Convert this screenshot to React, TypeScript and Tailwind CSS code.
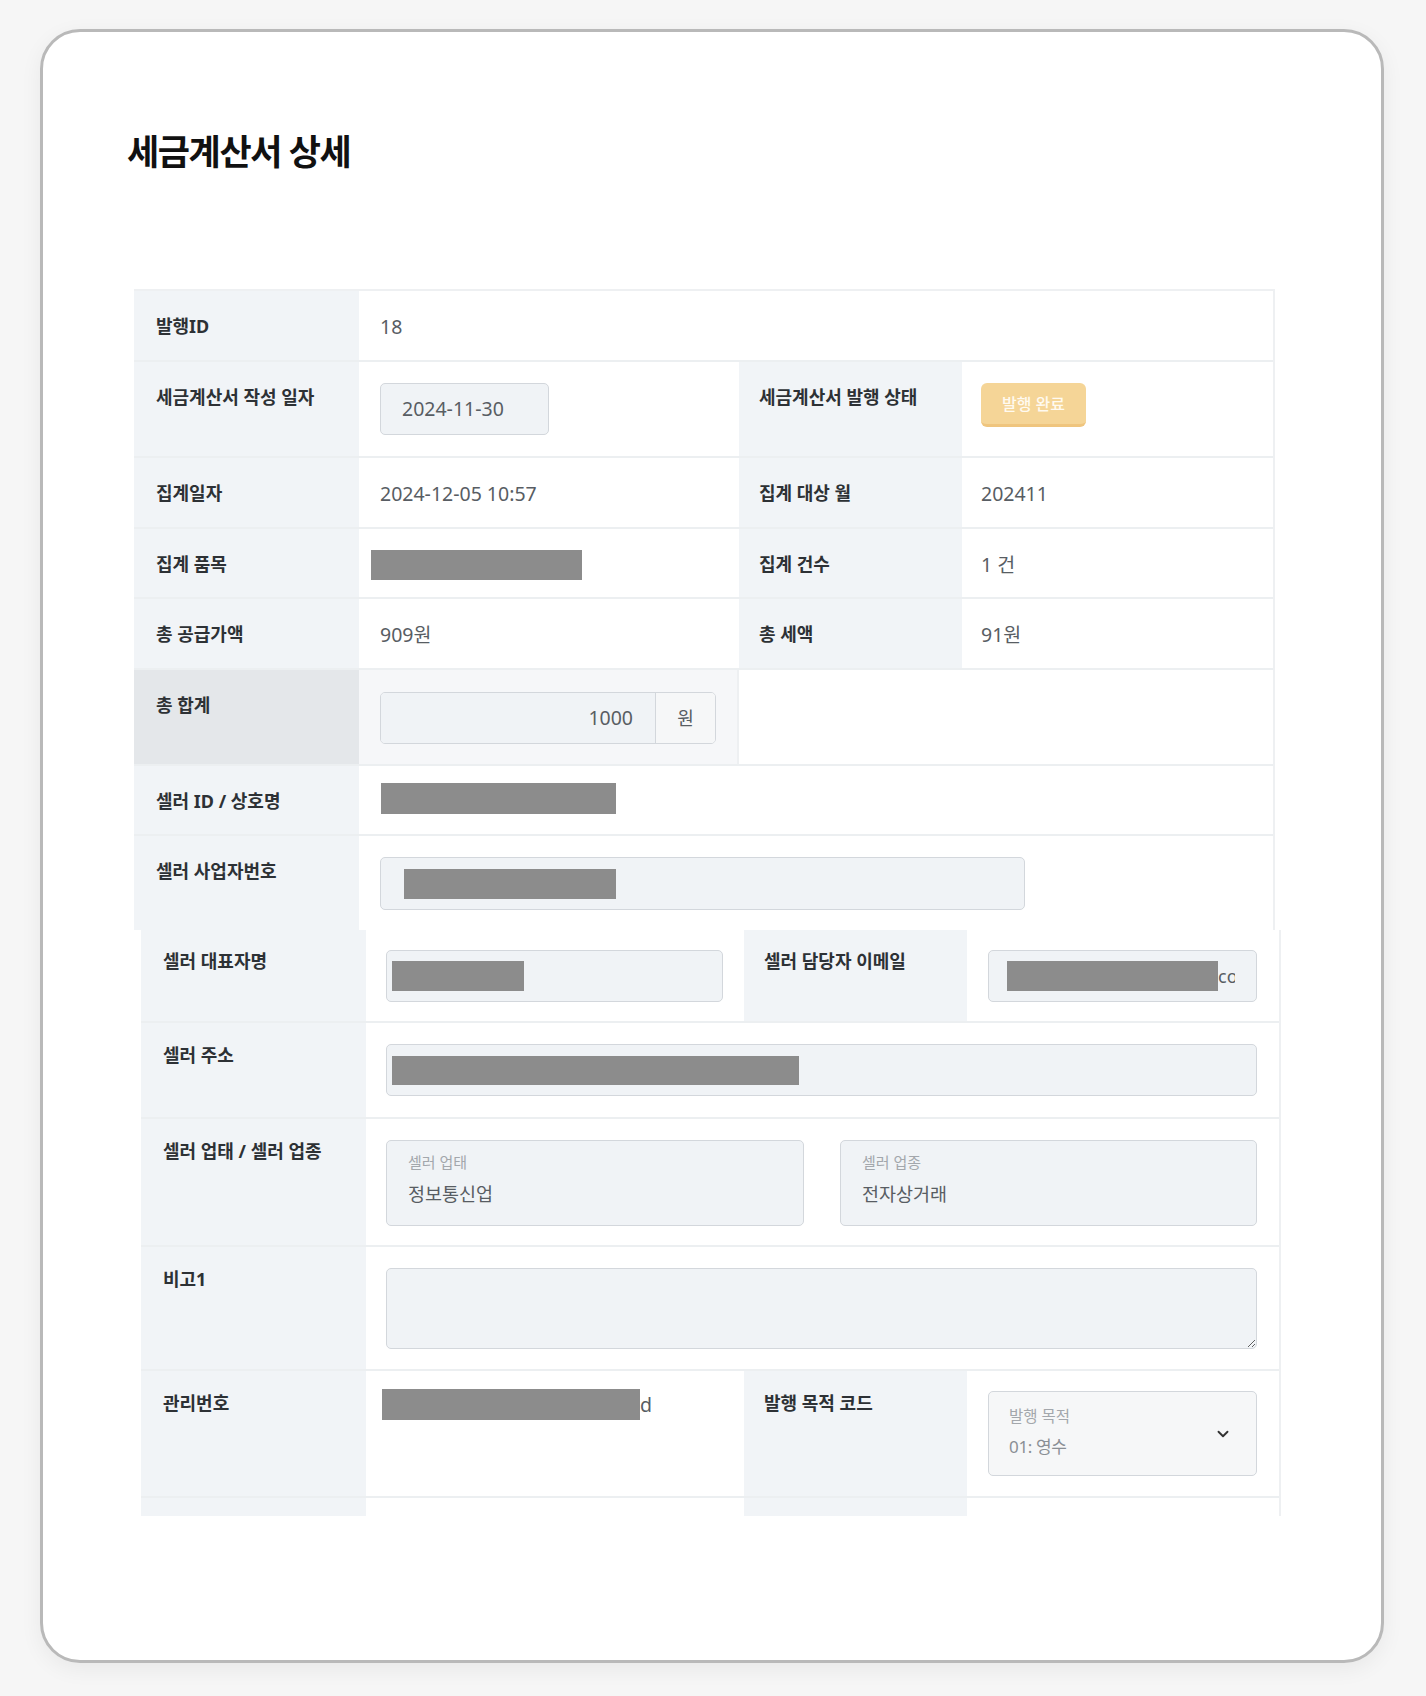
import React from "react";

const BASE = "font-['Noto_Sans','Noto_Sans_CJK_KR',sans-serif]";

function Label({ children, tone = "bg-[#f1f4f7]", top = "pt-[21px]" }: { children: React.ReactNode; tone?: string; top?: string }) {
  return (
    <div className={`w-[225px] shrink-0 ${tone} ${top} px-[22px] text-[18px] leading-[28px] font-bold text-[#2d3135]`}>
      {children}
    </div>
  );
}

function Label2({ children, top = "pt-[21px]" }: { children: React.ReactNode; top?: string }) {
  return (
    <div className={`w-[223px] shrink-0 bg-[#f1f4f7] ${top} px-[20px] text-[18px] leading-[28px] font-bold text-[#2d3135]`}>
      {children}
    </div>
  );
}

function Redact({ className }: { className: string }) {
  return <span className={`block shrink-0 bg-[#8c8c8c] ${className}`} />;
}

const box = "rounded-[5px] border border-[#d3d7dc] bg-[#f0f3f6]";

export default function App() {
  return (
    <div className={`${BASE} min-h-screen bg-[#f6f6f6] pt-[29px] pb-[33px] pl-[40px] pr-[42px]`}>
      <div className="h-[1634px] overflow-hidden rounded-[40px] border-[3px] border-[#b9b9b9] bg-white shadow-[0_6px_22px_rgba(0,0,0,0.06)]">
        <h1 className="pl-[84px] pt-[99px] text-[35px] leading-[42px] font-bold tracking-[-0.04em] text-[#111]">
          세금계산서 상세
        </h1>

        {/* first block */}
        <div className="ml-[91px] mt-[116px] w-[1141px] border-t-2 border-r-2 border-[#eef0f2] text-[19.5px] text-[#585d63]">
          <div className="flex h-[71px] border-b-2 border-[#eceff1]">
            <Label>발행ID</Label>
            <div className="flex-1 px-[21px] pt-[22px] leading-[27px]">18</div>
          </div>

          <div className="flex h-[96px] border-b-2 border-[#eceff1]">
            <Label>세금계산서 작성 일자</Label>
            <div className="w-[380px] shrink-0 px-[21px] pt-[21px]">
              <div className={`${box} flex h-[52px] w-[169px] items-center px-[21px]`}>2024-11-30</div>
            </div>
            <Label2>세금계산서 발행 상태</Label2>
            <div className="flex-1 px-[19px] pt-[21px]">
              <span className="inline-flex h-[44px] w-[105px] items-center justify-center rounded-[6px] border-b-[3px] border-[#efc57e] bg-[#f5d597] text-[16px] font-medium text-[#fffaf0]">
                발행 완료
              </span>
            </div>
          </div>

          <div className="flex h-[71px] border-b-2 border-[#eceff1]">
            <Label>집계일자</Label>
            <div className="w-[380px] shrink-0 px-[21px] pt-[22px] leading-[27px]">2024-12-05 10:57</div>
            <Label2>집계 대상 월</Label2>
            <div className="flex-1 px-[19px] pt-[22px] leading-[27px]">202411</div>
          </div>

          <div className="flex h-[70px] border-b-2 border-[#eceff1]">
            <Label>집계 품목</Label>
            <div className="w-[380px] shrink-0 pl-[12px] pt-[21px]">
              <Redact className="h-[30px] w-[211px]" />
            </div>
            <Label2>집계 건수</Label2>
            <div className="flex-1 px-[19px] pt-[22px] leading-[27px]">1 건</div>
          </div>

          <div className="flex h-[71px] border-b-2 border-[#eceff1]">
            <Label>총 공급가액</Label>
            <div className="w-[380px] shrink-0 px-[21px] pt-[22px] leading-[27px]">909원</div>
            <Label2>총 세액</Label2>
            <div className="flex-1 px-[19px] pt-[22px] leading-[27px]">91원</div>
          </div>

          <div className="flex h-[96px] border-b-2 border-[#eceff1]">
            <Label tone="bg-[#e4e7ea]">총 합계</Label>
            <div className="w-[380px] shrink-0 border-r-2 border-[#eef0f2] bg-[#f6f7f9] px-[21px] pt-[22px]">
              <div className="flex h-[52px] w-[336px] overflow-hidden rounded-[5px] border border-[#d3d7dc]">
                <div className="flex flex-1 items-center justify-end bg-[#f0f3f6] pr-[22px]">1000</div>
                <div className="flex w-[60px] items-center justify-center border-l border-[#d3d7dc] bg-[#f6f7f8] text-[18px]">원</div>
              </div>
            </div>
            <div className="flex-1 bg-white" />
          </div>

          <div className="flex h-[70px] border-b-2 border-[#eceff1]">
            <Label>셀러 ID / 상호명</Label>
            <div className="flex-1 pl-[22px] pt-[17px]">
              <Redact className="h-[31px] w-[235px]" />
            </div>
          </div>

          <div className="flex h-[94px]">
            <Label>셀러 사업자번호</Label>
            <div className="flex-1 px-[21px] pt-[21px]">
              <div className={`${box} flex h-[53px] w-[645px] items-center pl-[23px]`}>
                <Redact className="h-[30px] w-[212px]" />
              </div>
            </div>
          </div>
        </div>

        {/* second block */}
        <div className="ml-[98px] w-[1140px] border-r-2 border-[#eef0f2] text-[19.5px] text-[#585d63]">
          <div className="flex h-[93px] border-b-2 border-[#eceff1]">
            <Label top="pt-[17px]">셀러 대표자명</Label>
            <div className="w-[378px] shrink-0 pl-[20px] pt-[20px]">
              <div className={`${box} flex h-[52px] w-[337px] items-center pl-[5px]`}>
                <Redact className="h-[30px] w-[132px]" />
              </div>
            </div>
            <Label2 top="pt-[17px]">셀러 담당자 이메일</Label2>
            <div className="flex-1 pl-[21px] pt-[20px]">
              <div className={`${box} h-[52px] w-[269px] py-[6px] pl-[18px] pr-[21px]`}>
                <div className="flex h-full items-center overflow-hidden whitespace-nowrap">
                  <Redact className="h-[30px] w-[211px]" />
                  <span className="text-[18px]">com</span>
                </div>
              </div>
            </div>
          </div>

          <div className="flex h-[96px] border-b-2 border-[#eceff1]">
            <Label top="pt-[18px]">셀러 주소</Label>
            <div className="flex-1 pl-[20px] pr-[21px] pt-[21px]">
              <div className={`${box} flex h-[52px] w-[871px] items-center pl-[5px]`}>
                <Redact className="h-[29px] w-[407px]" />
              </div>
            </div>
          </div>

          <div className="flex h-[128px] border-b-2 border-[#eceff1]">
            <Label top="pt-[18px]">셀러 업태 / 셀러 업종</Label>
            <div className="flex flex-1 gap-[36px] pl-[20px] pt-[21px]">
              <div className={`${box} h-[86px] w-[418px] px-[21px] pt-[11px]`}>
                <div className="text-[15px] leading-[21px] text-[#a3a7ac]">셀러 업태</div>
                <div className="mt-[8px] text-[18.5px] leading-[25px]">정보통신업</div>
              </div>
              <div className={`${box} h-[86px] w-[417px] px-[21px] pt-[11px]`}>
                <div className="text-[15px] leading-[21px] text-[#a3a7ac]">셀러 업종</div>
                <div className="mt-[8px] text-[18.5px] leading-[25px]">전자상거래</div>
              </div>
            </div>
          </div>

          <div className="flex h-[124px] border-b-2 border-[#eceff1]">
            <Label top="pt-[18px]">비고1</Label>
            <div className="flex-1 pl-[20px] pt-[21px]">
              <textarea className={`${box} block h-[81px] w-[871px] outline-none`} readOnly />
            </div>
          </div>

          <div className="flex h-[127px] border-b-2 border-[#eceff1]">
            <Label top="pt-[18px]">관리번호</Label>
            <div className="flex w-[378px] shrink-0 items-start pl-[16px] pt-[18px]">
              <Redact className="h-[31px] w-[258px]" />
              <span className="leading-[31px]">d</span>
            </div>
            <Label2 top="pt-[18px]">발행 목적 코드</Label2>
            <div className="flex-1 pl-[21px] pt-[20px]">
              <div className="flex h-[85px] w-[269px] items-center rounded-[5px] border border-[#d3d7dc] bg-[#f6f7f8] pl-[20px] pr-[24px]">
                <div className="flex-1 -mt-[2px]">
                  <div className="text-[15.5px] leading-[21px] text-[#a3a7ac]">발행 목적</div>
                  <div className="mt-[8px] text-[17px] leading-[24px] tracking-[-0.02em] text-[#8a8f95]">01: 영수</div>
                </div>
                <svg width="18" height="18" viewBox="0 0 24 24" fill="none" stroke="#333" strokeWidth="2.5" strokeLinecap="round" strokeLinejoin="round">
                  <path d="M6 9l6 6 6-6" />
                </svg>
              </div>
            </div>
          </div>

          <div className="flex h-[18px]">
            <div className="w-[225px] shrink-0 bg-[#f1f4f7]" />
            <div className="w-[378px] shrink-0" />
            <div className="w-[223px] shrink-0 bg-[#f1f4f7]" />
            <div className="flex-1" />
          </div>
        </div>
      </div>
    </div>
  );
}
